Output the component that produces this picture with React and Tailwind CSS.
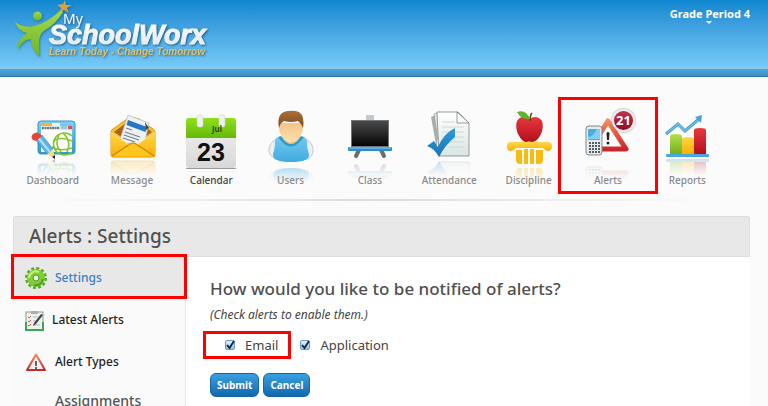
import { useId, useState } from "react";

function NavIcon({ base, fade = 0.3, children }) {
  const id = useId();
  return <svg viewBox="0 0 60 66" className="h-[66px] w-[60px] overflow-visible" aria-hidden="true">
    <defs>
      <linearGradient id={`${id}g`} x1="0" y1="0" x2="0" y2="1">
        <stop offset="0" stopColor="#fff" stopOpacity={fade}/>
        <stop offset="1" stopColor="#fff" stopOpacity="0"/>
      </linearGradient>
      <mask id={`${id}m`} maskUnits="userSpaceOnUse" x="0" y={base} width="60" height="18">
        <rect x="0" y={base} width="60" height="18" fill={`url(#${id}g)`}/>
      </mask>
    </defs>
    {children}
    <g mask={`url(#${id}m)`}><g transform={`translate(0 ${base * 2}) scale(1 -1)`}>{children}</g></g>
  </svg>;
}

function Gradients() {
  const ramps = {
    sky: ["#7fd0f5", "#2c98d6"],
    shirt: ["#74c8ee", "#3fabdf"],
    gold: ["#ffd84a", "#f9b000"],
    apple: ["#e8383d", "#b30f1c"],
    lime: ["#b6de4a", "#6fb122"],
    calendar: ["#8fe01a", "#66b80a"],
    page: ["#ffffff", "#d9e6e3"],
    paper: ["#f2f2f2", "#d8d8d8"],
    board: ["#4a4a4a", "#050505"],
    skin: ["#f2c486", "#fde0b4"],
    hair: ["#a8703a", "#7c4a1c"],
    warn: ["#f58a5a", "#c9262a"],
    check: ["#2f9ad8", "#1b75b5"],
    person: ["#a5d84a", "#6cb526"],
    word: ["#ffffff", "#dfe3e6"],
  };
  return <svg className="absolute size-0" aria-hidden="true"><defs>
    {Object.entries(ramps).map(([name, [from, to]]) => <linearGradient key={name} id={name} x1="0" y1="0" x2="0" y2="1">
      <stop offset="0" stopColor={from}/>
      <stop offset="1" stopColor={to}/>
    </linearGradient>)}
  </defs></svg>;
}

const DashboardIcon = () => <NavIcon base={54}>
  <rect x="15" y="16" width="37" height="33" rx="3" fill="url(#sky)" stroke="#3a93c4"/>
  <rect x="18" y="18" width="11" height="3" fill="#f5b52a"/>
  <rect x="29" y="18" width="8" height="3" fill="#e9f4fa"/>
  <path d="M18 21h31v26H18z" fill="#fff"/>
  <rect x="18" y="21" width="31" height="4" fill="#d9e1e6"/>
  <path d="M19 23h17" stroke="#555" strokeWidth="1.4" strokeDasharray="2 .5"/>
  <rect x="38" y="21" width="6" height="3" fill="#8fc7e6"/>
  <rect x="45" y="21" width="4" height="3" fill="#e0524a"/>
  <g fill="none" stroke="#86c52a" strokeWidth="1.6">
    <path d="M49 31A11 11 0 1 0 49 47"/>
    <path d="M30 36q8-5 19 0M29 42q8 5 20 1M36 30q-5 9 2 17M40 28q9 8 4 19"/>
  </g>
  <path d="M13 35l6-5 11 14-6 5z" fill="#59b4e8" stroke="#2f7fb5" strokeWidth=".6"/>
  <path d="M15.500 33l11 13.500" stroke="#b5e0f7" strokeWidth="2"/>
  <path d="M24 49l6-5 2 10z" fill="#f7dc8a"/>
  <path d="M29 52l3-2v4z" fill="#222"/>
  <path d="M10 35q-3-3 0-6 4-3 7 0l2 2-6 5z" fill="#e4453b"/>
</NavIcon>;

const MessageIcon = () => <NavIcon base={54}>
  <path d="M9 27q0-2 2-3l14-10q6-3 12 0l14 10q2 1 2 3v23q0 2-2 2H11q-2 0-2-2z" fill="#f7c02c" stroke="#dd9612"/>
  <path d="M12 27l12-9h14l12 9-18 13z" fill="#a8631c"/>
  <path d="M26 10l21 8-5 23-25-4z" fill="#eef1f4" stroke="#aab0b6" strokeWidth=".6"/>
  <path d="M26 15l19 7-1.500 5-19-7z" fill="#2578c8"/>
  <path d="M24 23l6 2M23 27l15 5M22 30l15 5M21 33l12 4" stroke="#7b838a" strokeWidth="1.300"/>
  <path d="M43 17l4 6-3 2z" fill="#4a4a4a"/>
  <path d="M9 27l18 13q4-3 8 0l18-13v23q0 2-2 2H11q-2 0-2-2z" fill="url(#gold)"/>
  <path d="M10 51l18-12q3-2 6 0l18 12" fill="#fdc51f" stroke="#c78512" strokeWidth="1.200"/>
  <path d="M9.500 27.500l17 12M52.500 27.500l-17 12" stroke="#ffe37c" fill="none"/>
</NavIcon>;

const CalendarIcon = () => <NavIcon base={65} fade={0.08}>
  <path d="M6 63h48l2 1H4z" fill="#999"/>
  <rect x="5" y="13" width="50" height="50" rx="3" fill="url(#paper)"/>
  <path d="M5 33V16q0-3 3-3h44q3 0 3 3v17z" fill="url(#calendar)"/>
  <rect x="16" y="10" width="6" height="12" rx="2" fill="#f1f1f1" stroke="#cfd8c2" strokeWidth=".6"/>
  <rect x="38" y="10" width="6" height="12" rx="2" fill="#f1f1f1" stroke="#cfd8c2" strokeWidth=".6"/>
  <text x="36" y="27" textAnchor="middle" fontSize="8" fontWeight="600" fill="#16300a">Jul</text>
  <text x="30" y="56" textAnchor="middle" fontFamily="Liberation Sans, sans-serif" fontSize="25" fontWeight="700" fill="#111">23</text>
</NavIcon>;

const UsersIcon = () => <NavIcon base={60} fade={0.45}>
  <path d="M16 34Q10 36 8 43q-1 7 6 11h33q6-4 5-11-2-7-8-9z" fill="#eceff2" stroke="#b6bcc2" strokeWidth=".8"/>
  <path d="M18 32h24q3 0 4 4 0 8 2 13 1 8-18 8t-18-8q2-5 2-13 1-4 4-4z" fill="url(#shirt)"/>
  <path d="M20 31q10 16 20 0l3 1q-13 19-26 0z" fill="#2d9dc6"/>
  <path d="M22 30h16v4q-8 10-16 0z" fill="#eebd7c"/>
  <path d="M18 18h24q1 9-4 15-8 9-16 0-5-6-4-15z" fill="url(#skin)"/>
  <path d="M18 23q-3-16 9-17 6-1 11 1 6 4 4 16-2-5-5-7-7 2-14 0-4 2-5 7z" fill="url(#hair)"/>
</NavIcon>;

const ClassIcon = () => <NavIcon base={56} fade={0.25}>
  <rect x="26" y="10" width="8" height="6" rx="1" fill="#c4c8cb"/>
  <path d="M19 45l-3 6M41 45l3 6" stroke="#6c6c6c" strokeWidth="4" strokeLinecap="round"/>
  <rect x="11" y="15" width="38" height="27" fill="#70767a"/>
  <rect x="12" y="16" width="36" height="25" fill="url(#board)"/>
  <rect x="8" y="42" width="44" height="4" rx="1" fill="#2a8fc8"/>
  <path d="M9 43h42" stroke="#8fd1f2"/>
</NavIcon>;

const AttendanceIcon = () => <NavIcon base={54} fade={0.25}>
  <path d="M12 12l6-3v36z" fill="#a9afae"/>
  <path d="M15 9l6-2v42z" fill="#e1e4e3" stroke="#8e9493" strokeWidth=".6"/>
  <path d="M18 7h21l11 11v33H20z" fill="url(#page)" stroke="#7d8583" strokeWidth=".8"/>
  <path d="M38 7l12 11H38z" fill="#f8fbfa" stroke="#7d8583" strokeWidth=".8"/>
  <path d="M23 17h13M23 22h22M23 27h22M23 32h22M23 37h22M30 42h15" stroke="#d0d8d6"/>
  <path d="M8 41l7-5 4 6q6-14 17-19v9q-10 8-16 20-4-8-12-11z" fill="url(#check)"/>
</NavIcon>;

const DisciplineIcon = () => <NavIcon base={61}>
  <path d="M12 37h37q4 0 4 4 0 5-4 5-3 0-5-3H17q-2 3-5 3-4 0-4-5 0-4 4-4z" fill="url(#gold)"/>
  <path d="M17 45h6v14h-3q-2 0-3-3zM25 44h4v15h-4zM31 44h4v15h-4zM37 45h7v11q-1 3-3 3h-4z" fill="#f9ba12"/>
  <path d="M30 14q-8-5-12 2-2 6 1 13 4 8 8 8 3-1 6 0 5 0 9-8 3-7 1-13-5-7-13-2z" fill="url(#apple)"/>
  <path d="M31 16q0-6 2-8" stroke="#6b3c16" strokeWidth="1.500" fill="none"/>
  <path d="M18 7q9-3 13 7-9 1-13-7z" fill="#5db52c"/>
</NavIcon>;

const AlertsIcon = () => <NavIcon base={56} fade={0.25}>
  <path d="M30 16l18 28H12z" fill="#fff" stroke="url(#warn)" strokeWidth="5" strokeLinejoin="round"/>
  <path d="M28.500 28q1.500-2 3 0l-.5 7h-2z" fill="#222"/>
  <circle cx="30" cy="38" r="1.500" fill="#222"/>
  <rect x="8" y="21" width="16" height="29" rx="3" fill="#e6ebee" stroke="#7e868c"/>
  <rect x="10" y="24" width="12" height="11" rx="1" fill="#45aee6"/>
  <path d="M10 32q6-1 9-8h2q1 0 1 2v8H10z" fill="#84cef5"/>
  <path d="M11 38h11M11 41h11M11 44h11M11 47h11" stroke="#555f66" strokeWidth="1.800" strokeDasharray="2 1"/>
</NavIcon>;

const ReportsIcon = () => <NavIcon base={53}>
  <path d="M13 31q0-2 6-2t6 2v18H13z" fill="url(#lime)"/>
  <path d="M25 34q0-2 6-2t6 2v15H25z" fill="url(#gold)"/>
  <path d="M37 25q0-2 6-2t6 2v24H37z" fill="url(#apple)"/>
  <rect x="9" y="49" width="43" height="3" rx="1" fill="#4aa9dc"/>
  <path d="M9 29l12-10 7 7 14-12" fill="none" stroke="#4096c6" strokeWidth="3"/>
  <path d="M9 29l12-10 7 7 14-12" fill="none" stroke="#6cc0ea" strokeWidth="1.500"/>
  <path d="M38 12l7-2-1 8z" fill="#4aa3d4"/>
</NavIcon>;

const GearIcon = () => <svg viewBox="0 0 22 22" className="size-[22px] shrink-0" aria-hidden="true">
  <circle cx="11" cy="11" r="9" fill="none" stroke="#57a526" strokeWidth="4" strokeDasharray="2.700 2.012"/>
  <circle cx="11" cy="11" r="6" fill="none" stroke="#7fce34" strokeWidth="6"/>
  <path d="M4 11a7 7 0 0 1 10-6" stroke="#c9ee80" strokeWidth="2" fill="none"/>
  <path d="M18 12a7 7 0 0 1-9 6" stroke="#4c9f22" strokeWidth="2" fill="none"/>
  <circle cx="11" cy="11" r="3" fill="#eef5e6" stroke="#4c9a24"/>
</svg>;

const ChecklistIcon = () => <svg viewBox="0 0 19 21" className="h-[21px] w-[19px] shrink-0" aria-hidden="true">
  <rect x="1" y="2" width="17" height="18" fill="#eef2ee" stroke="#8a9a8e"/>
  <path d="M1 12v8h17V12" fill="none" stroke="#3aa655" strokeWidth="2"/>
  <rect x="6" y="1" width="7" height="3" fill="#a9b0ac"/>
  <path d="M3 7l1 1 2-2M3 11l1 1 2-2M3 15l1 1 2-2" stroke="#d8504c" fill="none"/>
  <path d="M8 7h5M8 11h4M8 15h7" stroke="#b4bbb8"/>
  <path d="M16 4l-7 9-1 3 3-2 7-9z" fill="#3d4650"/>
</svg>;

const WarningIcon = () => <svg viewBox="0 0 22 20" className="h-5 w-[22px] shrink-0" aria-hidden="true">
  <path d="M11 2.500L20 18H2z" fill="#f4f1f0" stroke="url(#warn)" strokeWidth="2" strokeLinejoin="round"/>
  <path d="M11 9v5M11 15v2" stroke="#333" strokeWidth="1.500"/>
</svg>;

const Logo = () => <svg viewBox="0 0 220 68" className="h-[68px] w-[220px]" role="img" aria-label="My SchoolWorx">
  <g className="drop-shadow-[1px_1px_1px_#0a4a7880]">
    <circle cx="37.500" cy="16" r="4.500" fill="url(#person)"/>
    <path d="M15 22Q24 28 34 26 47 23 61 10l2 2Q55 25 45 30q-7 5-6 15l.5 12Q31 49 31 39q-10 1-13 11-2-10 9-17-9-2-12-11z" fill="url(#person)"/>
    <path d="M65 0l1 5 6 0-5 3 2 5-5-3-4 2 1-4-4-3 6-1z" fill="#d3a045"/>
  </g>
  <g className="drop-shadow-[1px_1px_1px_#0a3c64b0]">
    <text x="63" y="24" fontFamily="Noto Sans, sans-serif" fontSize="14" fill="#fff">My</text>
    <text x="49" y="44" fontFamily="Liberation Sans, sans-serif" fontSize="27" fontWeight="700" fontStyle="italic" fill="url(#word)" stroke="#f2f5f7" strokeWidth="1">SchoolWorx</text>
    <text x="49" y="55" fontFamily="Liberation Sans, sans-serif" fontSize="10" fontWeight="700" fontStyle="italic" fill="#dfc36c">Learn Today - Change Tomorrow</text>
  </g>
</svg>;

const NAV_ITEMS = [
  { label: "Dashboard", Icon: DashboardIcon },
  { label: "Message", Icon: MessageIcon },
  { label: "Calendar", Icon: CalendarIcon, active: true },
  { label: "Users", Icon: UsersIcon },
  { label: "Class", Icon: ClassIcon },
  { label: "Attendance", Icon: AttendanceIcon },
  { label: "Discipline", Icon: DisciplineIcon },
  { label: "Alerts", Icon: AlertsIcon, count: 21, marked: true },
  { label: "Reports", Icon: ReportsIcon },
];

function NavItem({ label, Icon, active, count, marked }) {
  return <a href="#" className="relative flex flex-1 flex-col items-center">
    <Icon/>
    <span className={`text-[10px] leading-[18px] font-medium ${active ? "text-[#444]" : "text-[#8a8a8a]"}`}>{label}</span>
    {count && <span className="absolute top-1 left-1/2 ml-1 grid size-[23px] place-items-center rounded-full border-2 border-[#f1e8ea] bg-linear-to-b from-[#c03450] to-[#8d0a24] text-[13px] font-bold text-white shadow-[0_0_2px_#777]">{count}</span>}
    {marked && <span className="absolute -inset-x-[10px] -top-2 -bottom-[5px] border-3 border-[#f00]"/>}
  </a>;
}

function CheckOption({ label, checked, onChange }) {
  return <label className="flex items-center gap-[10px] text-[13px] leading-5 text-[#444]">
    <span className="grid size-[10px] place-items-center">
      <input type="checkbox" checked={checked} onChange={onChange} className="peer col-start-1 row-start-1 size-[10px] appearance-none rounded-xs border border-[#6f9cc4] bg-linear-to-b from-[#e3f1fc] to-[#8fc1ec]"/>
      <svg viewBox="0 0 10 10" className="pointer-events-none invisible col-start-1 row-start-1 size-[10px] overflow-visible peer-checked:visible" aria-hidden="true"><path d="M2 5l2.500 3L9 1" fill="none" stroke="#12243a" strokeWidth="1.800"/></svg>
    </span>
    {label}
  </label>;
}

const buttonClass = "h-6 rounded-md border border-[#1467a4] bg-linear-to-b from-[#3aa0e2] to-[#0f69ac] px-[6px] text-[10px] font-bold text-white";

export default function App() {
  const [notify, setNotify] = useState({ email: true, application: true });
  const toggle = (key) => setNotify((current) => ({ ...current, [key]: !current[key] }));

  return <div className="min-h-screen bg-[#fbfbfb] font-['Noto_Sans',sans-serif]">
    <Gradients/>
    <header>
      <div className="flex justify-between bg-linear-to-b from-[#0a86d0] to-[#76cbf7] pr-[18px]">
        <Logo/>
        <button className="relative mt-1 h-5 text-[11px] font-bold text-white">
          Grade Period 4
          <span className="absolute top-[17px] left-1/2 -ml-1 border-x-3 border-t-3 border-x-transparent border-t-white"/>
        </button>
      </div>
      <div className="h-[9px] border-t border-b border-t-[#8ac8ea] border-b-[#2f78ac] bg-linear-to-b from-[#4ba5d8] to-[#3f8fc6]"/>
    </header>

    <nav className="flex pt-7 pr-[41px] pl-[13px]">
      {NAV_ITEMS.map((item) => <NavItem key={item.label} {...item}/>)}
    </nav>
    <div className="mt-[10px] mr-[58px] ml-[40px] h-[2px] bg-linear-to-r from-transparent via-[#dcdcdc] to-transparent"/>

    <section className="mt-[15px] mr-[18px] ml-[13px]">
      <h1 className="rounded-t-xs border border-[#dedede] bg-[#e8e8e8] px-[15px] text-[19px] leading-[39px] font-medium text-[#505050]">Alerts : Settings</h1>
      <div className="flex bg-white">
        <aside className="w-[173px] shrink-0 border-r border-[#e8e8e8] bg-[#fafafa] text-xs font-medium text-[#222]">
          <a href="#" className="relative flex h-[42px] items-center gap-2 bg-[#e8e8e8] pl-3 text-[#3a7fc1]">
            <GearIcon/>Settings
            <span className="absolute -top-[3px] -right-[2px] bottom-0 -left-[2px] border-3 border-[#f00]"/>
          </a>
          <a href="#" className="flex h-[42px] items-center gap-2 pl-3"><ChecklistIcon/>Latest Alerts</a>
          <a href="#" className="flex h-[42px] items-center gap-2 pl-3"><WarningIcon/>Alert Types</a>
          <a href="#" className="flex h-9 items-center pl-[42px] text-sm text-[#555]">Assignments</a>
        </aside>

        <form className="min-w-0 flex-1 pt-5 pl-6" onSubmit={(event) => event.preventDefault()}>
          <h2 className="text-[17px] leading-6 font-medium text-[#505050]">How would you like to be notified of alerts?</h2>
          <p className="mt-[6px] text-xs leading-4 text-[#444] italic">(Check alerts to enable them.)</p>
          <div className="mt-3 flex gap-[22px] pl-[15px]">
            <div className="relative">
              <CheckOption label="Email" checked={notify.email} onChange={() => toggle("email")}/>
              <span className="pointer-events-none absolute -inset-y-1 -right-[13px] -left-[22px] border-3 border-[#f00]"/>
            </div>
            <CheckOption label="Application" checked={notify.application} onChange={() => toggle("application")}/>
          </div>
          <div className="mt-[18px] flex gap-1">
            <button type="submit" className={buttonClass}>Submit</button>
            <button type="button" className={buttonClass}>Cancel</button>
          </div>
        </form>
      </div>
    </section>
  </div>;
}
